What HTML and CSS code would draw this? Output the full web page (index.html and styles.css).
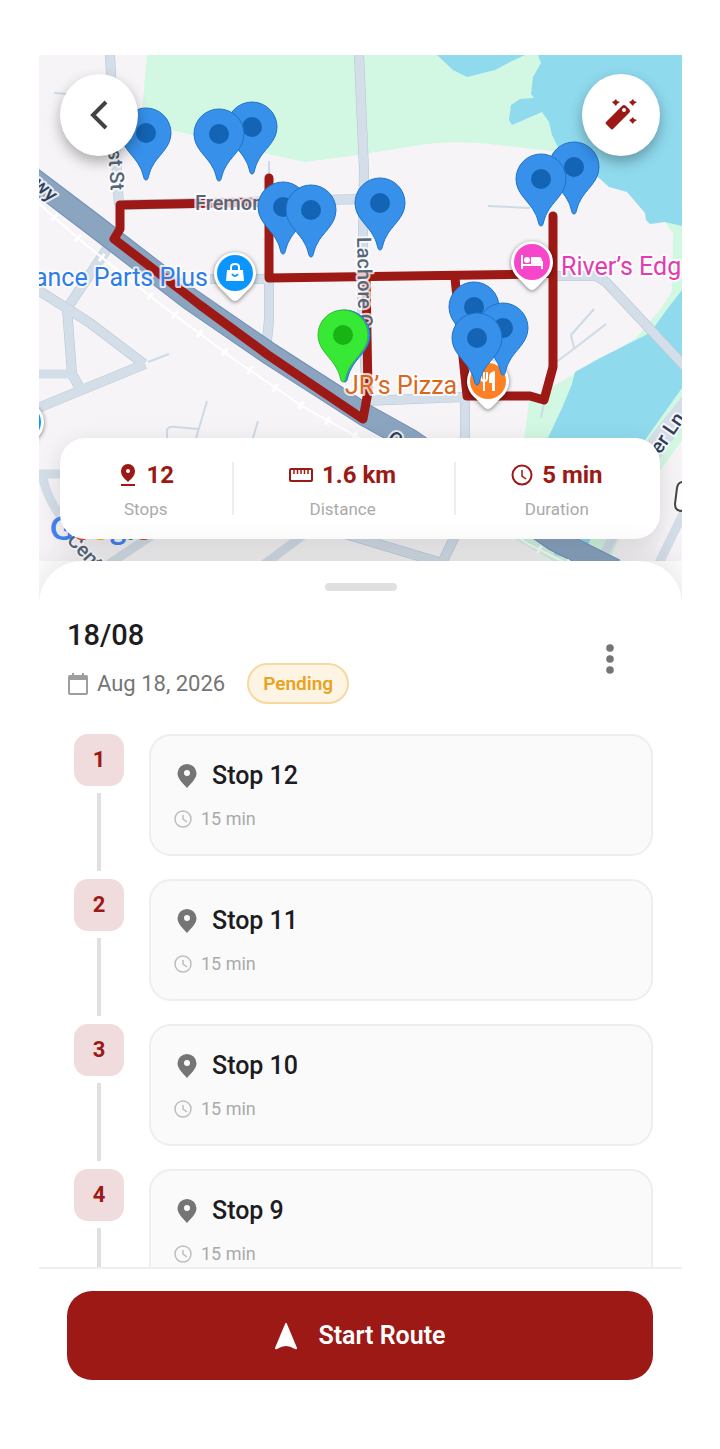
FILE: index.html
```html
<!DOCTYPE html>
<html lang="en">
<head>
  <meta charset="UTF-8">
  <meta name="viewport" content="width=device-width, initial-scale=1">
  <title>Route 18/08</title>
  <link rel="stylesheet" href="styles.css">
</head>
<body>

  <main class="app">
    <section class="map">
      <svg class="map-canvas" viewBox="39 55 643 506" preserveAspectRatio="xMidYMid slice" role="img" aria-label="Route map">
        <defs>
          <g id="pin">
            <path class="pin-body" d="M0 47C-3 47-2 41-6 34C-11 23-25 15-25 0A25 25 0 0 1 25 0C25 15 11 23 6 34C2 41 3 47 0 47Z"/>
            <circle class="pin-dot" r="10"/>
          </g>
          <g id="poi">
            <path class="poi-shape" d="M0 28C-4 28-7 22-14 16A21 21 0 1 1 14 16C7 22 4 28 0 28Z"/>
          </g>
        </defs>

        <rect class="land" x="39" y="55" width="643" height="506"/>

        <!-- parks -->
        <path class="park" d="M147 55L141 122L172 130L192 135L252 150L268 154L305 162L358 155L420 145Q450 140 490 144L560 152L600 100V55Z"/>
        <path class="park" d="M627 189L645 213L660 222L673 232L672 291L662 307L636 338L600 360L555 385L529 402L524 440L515 539L553 561H610L620 535L664 465L682 440V210Z"/>
        <path class="land" d="M573 160L599 178L627 192L645 213L650 224L665 222L672 232V280L650 200L560 162Z"/>

        <!-- water -->
        <path class="water" d="M437 55L453 70L467 77L495 70L512 61L525 55Z"/>
        <path class="water" d="M538 55L541 63L533 77L531 94L534 98L520 99L511 105L509 120L512 125L542 112L549 122L552 135L558 147L575 160L599 178L609 187L627 192L645 213L646 220L650 224L665 222L682 226V55Z"/>
        <path class="water" d="M682 290L668 308L650 333L600 358L575 372L572 384L562 408L547 440L548 539L555 555L580 561L600 520L645 440L682 388Z"/>

        <!-- streets -->
        <g class="driveway">
          <path d="M54 93L82 95"/>
          <path d="M148 362L169 354"/>
          <path d="M207 401L194 445"/>
          <path d="M167 445V430Q168 426 176 427L198 429"/>
          <path d="M258 421L250 448"/>
          <path d="M488 206L530 208"/>
          <path d="M594 309L571 335L574 348"/>
          <path d="M606 324L575 348L555 363"/>
          <path d="M545 398L541 418"/>
          <path d="M269 161V180"/>
        </g>
        <g class="street-edge">
          <path d="M110 55L113 110L119 205"/>
          <path d="M359 55L364 170L362 300L367 400"/>
          <path d="M119 205L364 199"/>
          <path d="M210 279H269V320L266 350"/>
          <path d="M364 401L462 397"/>
          <path d="M465 397V445"/>
          <path d="M38 290L90 323L144 364"/>
          <path d="M145 364L38 408"/>
          <path d="M67 308L72 374L81 390"/>
          <path d="M109 246L70 304"/>
          <path d="M345 534L442 563L458 530"/>
          <path d="M550 276H596L606 282L690 372"/>
        </g>
        <g class="street">
          <path d="M110 55L113 110L119 205"/>
          <path d="M359 55L364 170L362 300L367 400"/>
          <path d="M119 205L364 199"/>
          <path d="M210 279H269V320L266 350"/>
          <path d="M364 401L462 397"/>
          <path d="M465 397V445"/>
          <path d="M38 290L90 323L144 364"/>
          <path d="M145 364L38 408"/>
          <path d="M67 308L72 374L81 390"/>
          <path d="M38 374H72"/>
          <path d="M109 246L70 304"/>
          <path d="M38 474H70"/>
          <path d="M42 475Q48 500 60 515"/>
          <path d="M106 566L160 530"/>
          <path d="M262 566L310 530"/>
          <path d="M345 534L442 563L458 530"/>
          <path d="M684 512L658 565"/>
          <path d="M618 528L603 556"/>
          <path d="M550 276H596L606 282L690 372"/>
          <path class="wide" d="M692 400L660 440L640 470"/>
        </g>

        <!-- highway and railway -->
        <path class="highway-edge" d="M28 175L90 222L190 299L270 354L365 415L410 440L555 540L615 570"/>
        <path class="highway" d="M28 175L90 222L190 299L270 354L365 415L410 440L555 540L615 570"/>
        <path class="rail" d="M30 196L85 244L160 304L235 360L305 408L390 455L530 545L570 565"/>
        <path class="rail-ties" d="M30 196L85 244L160 304L235 360L305 408L390 455L530 545L570 565"/>

        <!-- route -->
        <path class="route" d="M269 178V278L540 274L553 273V216V367L544 400L530 396H467L455 278"/>
        <path class="route" d="M269 202L120 205V229L114 239L152 268L200 305L268 355L363 419L368 392L366 278"/>

        <!-- street names -->
        <text class="street-name" x="195" y="210">Fremon</text>
        <text class="street-name" transform="translate(357 237) rotate(89)">Lachore C</text>
        <text class="street-name" transform="translate(108 150) rotate(86)">st St</text>
        <text class="street-name dark" transform="translate(32 186) rotate(42)">wy</text>
        <text class="street-name dark" transform="translate(386 442) rotate(30)">C</text>
        <text class="street-name dark" transform="translate(660 455) rotate(-55)">er Ln</text>
        <text class="street-name" transform="translate(66 541) rotate(47)">Cent</text>
        <path class="shield" d="M690 482H683Q678 482 677 488L675 504Q675 511 682 511H690Z"/>

        <!-- places -->
        <text class="place blue" x="208" y="286" text-anchor="end">ance Parts Plus</text>
        <text class="place pink" x="561" y="275">River’s Edg</text>
        <text class="place orange" x="345" y="394">JR’s Pizza</text>

        <use href="#poi" x="23" y="422"/>
        <circle class="fill-blue" cx="23" cy="422" r="18"/>
        <g transform="translate(235 273)">
          <use href="#poi"/>
          <circle class="fill-blue" r="18"/>
          <path class="fill-white" d="M-8-3H8L9 8H-9Z"/>
          <path class="line-white" d="M-4-3V-6Q-4-9 0-9Q4-9 4-6V-3"/>
          <path class="line-blue" d="M-3 1Q0 5 3 1"/>
        </g>
        <g transform="translate(532 262)">
          <use href="#poi"/>
          <circle class="fill-pink" r="18"/>
          <path class="line-white" d="M-10-7V7M-10 3H10M10 7V-1"/>
          <circle class="fill-white" cx="-5" cy="-2" r="3"/>
          <path class="fill-white" d="M-1-5H7Q10-5 10-1V2H-1Z"/>
        </g>
        <g transform="translate(488 381)">
          <use href="#poi"/>
          <circle class="fill-orange" r="18"/>
          <path class="line-white" d="M-7-9V-3Q-7 0-4 0Q-1 0-1-3V-9M-4-9V10"/>
          <path class="fill-white" d="M7-10V10H4V2H1V-4Q1-9 7-10Z"/>
        </g>

        <!-- stops -->
        <g class="pins">
          <use href="#pin" x="146" y="133"/>
          <use href="#pin" x="252" y="127"/>
          <use href="#pin" x="219" y="134"/>
          <use href="#pin" x="283" y="207"/>
          <use href="#pin" x="311" y="210"/>
          <use href="#pin" x="380" y="203"/>
          <use href="#pin" x="574" y="167"/>
          <use href="#pin" x="541" y="179"/>
          <use href="#pin" x="474" y="307"/>
          <use href="#pin" x="503" y="328"/>
          <use href="#pin" x="477" y="338"/>
          <use href="#pin" x="345" y="335"/>
        </g>
        <g class="pins start">
          <use href="#pin" x="343" y="335"/>
        </g>

        <text class="google" x="50" y="540"><tspan class="g-blue">G</tspan><tspan class="g-red">o</tspan><tspan class="g-yellow">o</tspan><tspan class="g-blue">g</tspan><tspan class="g-green">l</tspan><tspan class="g-red">e</tspan></text>
      </svg>

      <button class="round-btn back" type="button" aria-label="Back">
        <svg width="32" height="34" viewBox="0 0 32 34"><path class="chevron" d="M23 4L10 17L23 30"/></svg>
      </button>
      <button class="round-btn optimize" type="button" aria-label="Optimize route">
        <svg width="34" height="34" viewBox="0 0 34 34" fill="currentColor">
          <path fill-rule="evenodd" d="M2 24L18 8Q20 6 22 8L25 11Q27 13 25 15L9 31Q8 32 7 31L2 26Q1 25 2 24ZM20 10A2 2 0 1 0 20 14A2 2 0 1 0 20 10Z"/>
          <path d="M12 1L13 3L16 4L13 6L12 8L10 6L8 4L10 3ZM29 1L30 3L33 4L30 6L29 8L27 6L25 4L27 3ZM29 19L30 21L33 22L30 24L29 26L27 24L25 22L27 21Z"/>
        </svg>
      </button>

      <div class="stats">
        <div class="stat">
          <div class="stat-value">
            <svg width="20" height="24" viewBox="0 0 20 24" fill="currentColor"><path fill-rule="evenodd" d="M10 1A7 7 0 0 0 3 8C3 13 7 16 10 19C13 16 17 13 17 8A7 7 0 0 0 10 1ZM10 6A2 2 0 1 1 10 10A2 2 0 1 1 10 6Z"/><path d="M3 21H17V23H3Z"/></svg>
            <span>12</span>
          </div>
          <div class="stat-label">Stops</div>
        </div>
        <div class="stat">
          <div class="stat-value">
            <svg width="24" height="24" viewBox="0 0 24 24" fill="none" stroke="currentColor" stroke-width="2"><rect x="1" y="6" width="22" height="12" rx="1"/><path d="M5 6V11M8.500 6V11M12 6V11M15.500 6V11M19 6V11" stroke-width="1.500"/></svg>
            <span>1.6 km</span>
          </div>
          <div class="stat-label">Distance</div>
        </div>
        <div class="stat">
          <div class="stat-value">
            <svg width="22" height="24" viewBox="0 0 22 24" fill="none" stroke="currentColor" stroke-width="2"><circle cx="11" cy="12" r="9.500"/><path d="M11 7V13L15 16" stroke-width="1.500"/></svg>
            <span>5 min</span>
          </div>
          <div class="stat-label">Duration</div>
        </div>
      </div>
    </section>

    <section class="sheet">
      <div class="handle"></div>

      <header class="route-header">
        <div>
          <h1>18/08</h1>
          <div class="route-meta">
            <svg width="22" height="24" viewBox="0 0 22 24"><path class="cal-frame" d="M3 4H19Q20 4 20 5V21Q20 22 19 22H3Q2 22 2 21V5Q2 4 3 4Z"/><path class="cal-top" d="M2 3H20V8H2ZM5 1H7V4H5ZM15 1H17V4H15Z"/></svg>
            <span>Aug 18, 2026</span>
            <span class="status">Pending</span>
          </div>
        </div>
        <button class="menu-btn" type="button" aria-label="More options">
          <svg width="8" height="30" viewBox="0 0 8 30" fill="currentColor"><circle cx="4" cy="4" r="3.800"/><circle cx="4" cy="15" r="3.800"/><circle cx="4" cy="26" r="3.800"/></svg>
        </button>
      </header>

      <ol class="stops">
        <li class="stop">
          <div class="marker"><span class="number">1</span></div>
          <div class="card">
            <h2><svg class="i-pin" viewBox="0 0 26 26"><path d="M13 1A9.500 9.500 0 0 0 3.500 10C3.500 16 9 20 13 25C17 20 22.500 16 22.500 10A9.500 9.500 0 0 0 13 1ZM13 7A3 3 0 1 1 13 13A3 3 0 1 1 13 7Z"/></svg>Stop 12</h2>
            <p><svg class="i-clock" viewBox="0 0 18 18"><circle cx="9" cy="9" r="8"/><path d="M9 5V9L13 12"/></svg>15 min</p>
          </div>
        </li>
        <li class="stop">
          <div class="marker"><span class="number">2</span></div>
          <div class="card">
            <h2><svg class="i-pin" viewBox="0 0 26 26"><path d="M13 1A9.500 9.500 0 0 0 3.500 10C3.500 16 9 20 13 25C17 20 22.500 16 22.500 10A9.500 9.500 0 0 0 13 1ZM13 7A3 3 0 1 1 13 13A3 3 0 1 1 13 7Z"/></svg>Stop 11</h2>
            <p><svg class="i-clock" viewBox="0 0 18 18"><circle cx="9" cy="9" r="8"/><path d="M9 5V9L13 12"/></svg>15 min</p>
          </div>
        </li>
        <li class="stop">
          <div class="marker"><span class="number">3</span></div>
          <div class="card">
            <h2><svg class="i-pin" viewBox="0 0 26 26"><path d="M13 1A9.500 9.500 0 0 0 3.500 10C3.500 16 9 20 13 25C17 20 22.500 16 22.500 10A9.500 9.500 0 0 0 13 1ZM13 7A3 3 0 1 1 13 13A3 3 0 1 1 13 7Z"/></svg>Stop 10</h2>
            <p><svg class="i-clock" viewBox="0 0 18 18"><circle cx="9" cy="9" r="8"/><path d="M9 5V9L13 12"/></svg>15 min</p>
          </div>
        </li>
        <li class="stop">
          <div class="marker"><span class="number">4</span></div>
          <div class="card">
            <h2><svg class="i-pin" viewBox="0 0 26 26"><path d="M13 1A9.500 9.500 0 0 0 3.500 10C3.500 16 9 20 13 25C17 20 22.500 16 22.500 10A9.500 9.500 0 0 0 13 1ZM13 7A3 3 0 1 1 13 13A3 3 0 1 1 13 7Z"/></svg>Stop 9</h2>
            <p><svg class="i-clock" viewBox="0 0 18 18"><circle cx="9" cy="9" r="8"/><path d="M9 5V9L13 12"/></svg>15 min</p>
          </div>
        </li>
      </ol>

      <footer class="actions">
        <button class="start-btn" type="button">
          <svg width="24" height="28" viewBox="0 0 24 28" fill="currentColor"><path d="M12 1Q13 1 13 2L23 26Q23 28 21 27Q16 24 12 24Q8 24 3 27Q1 28 1 26L11 2Q11 1 12 1Z"/></svg>
          Start Route
        </button>
      </footer>
    </section>
  </main>

</body>
</html>
```
FILE: styles.css
```css
:root {
  --red: #9c1915;
  --text: #1c1c22;
  --grey: #757575;
  --grey-light: #aaaaaa;
  --line: #eeeeee;
}

* {
  box-sizing: border-box;
}

body {
  margin: 0;
  background: #fff;
  color: var(--text);
  font-family: Roboto, "Liberation Sans", sans-serif;
}

button {
  border: none;
  padding: 0;
  font-family: inherit;
  cursor: pointer;
}

svg {
  flex-shrink: 0;
}

.app {
  display: flex;
  flex-direction: column;
  height: 100vh;
  padding-top: 55px;
  margin: 0 38px 0 39px;
  overflow: hidden;
}

/* MAP */
.map {
  position: relative;
  flex: none;
  height: 506px;
}

.map-canvas {
  display: block;
  width: 100%;
  height: 100%;
}

.land { fill: #f6f4f6; }
.park { fill: #d2f7e2; }
.water { fill: #90daee; }

.street path,
.street-edge path,
.driveway path {
  fill: none;
  stroke: #d3dee8;
  stroke-width: 9;
  stroke-linejoin: round;
}

.street-edge path {
  stroke: #b4c6d8;
  stroke-width: 10;
}

.street .wide {
  stroke-width: 20;
}

.driveway path {
  stroke: #cddae7;
  stroke-width: 2;
}

.highway,
.highway-edge,
.rail,
.rail-ties,
.route {
  fill: none;
}

.highway-edge {
  stroke: #6f90b8;
  stroke-width: 23;
}

.highway {
  stroke: #8ba5c1;
  stroke-width: 21;
}

.rail {
  stroke: #fff;
  stroke-width: 2;
}

.rail-ties {
  stroke: #fff;
  stroke-width: 9;
  stroke-dasharray: 3 28;
}

.route {
  stroke: var(--red);
  stroke-width: 9;
  stroke-linejoin: round;
  stroke-linecap: round;
}

.street-name,
.place {
  paint-order: stroke;
  stroke: rgba(255, 255, 255, 0.8);
  stroke-width: 4;
  stroke-linejoin: round;
}

.street-name {
  font-size: 20px;
  font-weight: 500;
  fill: #566579;
}

.street-name.dark { fill: #2f3f5c; }

.place { font-size: 25px; }
.place.blue { fill: #2f7de9; }
.place.pink { fill: #e33bb0; }
.place.orange { fill: #d9681d; }

.shield {
  fill: #fff;
  stroke: #444;
  stroke-width: 2;
}

.poi-shape {
  fill: #fff;
  filter: drop-shadow(0 1px 2px rgba(0, 0, 0, 0.5));
}

.fill-blue { fill: #0b96ff; }
.fill-pink { fill: #f846cb; }
.fill-orange { fill: #fd8025; }
.fill-white { fill: #fff; }

.line-white,
.line-blue {
  fill: none;
  stroke: #fff;
  stroke-width: 2;
}

.line-blue { stroke: #0b96ff; }

.pins {
  --pin: #3790ea;
  --pin-edge: #1f74c9;
  --pin-dot: #1364b4;
}

.pins.start {
  --pin: #37e935;
  --pin-edge: #2dc02c;
  --pin-dot: #17b414;
}

.pin-body {
  fill: var(--pin);
  stroke: var(--pin-edge);
}

.pin-dot { fill: var(--pin-dot); }

.google {
  font-family: Lato, sans-serif;
  font-size: 32px;
  font-weight: 700;
}

.g-blue { fill: #4285f4; }
.g-red { fill: #ea4335; }
.g-yellow { fill: #fbbc05; }
.g-green { fill: #34a853; }

.round-btn {
  position: absolute;
  top: 19px;
  display: flex;
  align-items: center;
  justify-content: center;
  width: 78px;
  height: 82px;
  border-radius: 50%;
  background: #fff;
  color: var(--red);
  box-shadow: 0 6px 14px rgba(0, 0, 0, 0.3);
}

.back { left: 21px; }
.optimize { right: 22px; }

.chevron {
  fill: none;
  stroke: #424242;
  stroke-width: 4;
}

/* STATS */
.stats {
  position: absolute;
  left: 21px;
  right: 22px;
  bottom: 22px;
  display: flex;
  align-items: center;
  padding: 22px 0 19px;
  border-radius: 25px;
  background: #fff;
  box-shadow: 0 6px 24px rgba(0, 0, 0, 0.12);
}

.stat {
  flex: 1 1 auto;
  display: flex;
  flex-direction: column;
  align-items: center;
  gap: 8px;
}

.stat + .stat {
  background: linear-gradient(var(--line), var(--line)) 0 2px / 2px 53px no-repeat;
}

.stat-value {
  display: flex;
  align-items: center;
  gap: 9px;
  font-size: 24px;
  font-weight: 700;
  line-height: 30px;
  color: var(--red);
}

.stat-label {
  font-size: 17px;
  line-height: 22px;
  color: var(--grey-light);
}

/* SHEET */
.sheet {
  position: relative;
  flex: 1;
  display: flex;
  flex-direction: column;
  min-height: 0;
  border-radius: 43px 43px 0 0;
  background: #fff;
  box-shadow: 0 -6px 36px rgba(0, 0, 0, 0.12);
}

.handle {
  flex: none;
  width: 72px;
  height: 8px;
  margin: 22px auto 27px;
  border-radius: 4px;
  background: #e0e0e0;
}

.route-header {
  display: flex;
  justify-content: space-between;
  padding: 0 29px 30px 28px;
}

h1 {
  margin: 0 0 11px;
  font-size: 29px;
  font-weight: 500;
  line-height: 34px;
}

.route-meta {
  display: flex;
  align-items: center;
  gap: 8px;
  font-size: 22px;
  color: var(--grey);
}

.cal-frame {
  fill: none;
  stroke: #9e9e9e;
  stroke-width: 2;
}

.cal-top { fill: #9e9e9e; }

.status {
  margin-left: 14px;
  padding: 0 14px;
  border: 2px solid #f6d9a0;
  border-radius: 21px;
  background: #fdf4e4;
  color: #e8a31f;
  font-size: 19px;
  font-weight: 600;
  line-height: 37px;
}

.menu-btn {
  display: flex;
  align-items: center;
  justify-content: center;
  width: 86px;
  height: 81px;
  background: none;
  color: var(--grey);
}

.stops {
  flex: 1;
  min-height: 0;
  margin: 0;
  padding: 0 29px 0 28px;
  list-style: none;
  overflow-y: auto;
  scrollbar-width: none;
}

.stop {
  display: flex;
  gap: 18px;
}

.marker {
  display: flex;
  flex-direction: column;
  align-items: center;
  gap: 7px;
  width: 64px;
  padding-bottom: 8px;
}

.marker::after {
  content: "";
  flex: 1;
  width: 4px;
  background: #e0e0e0;
}

.number {
  width: 50px;
  border-radius: 14px;
  background: #f0dcdd;
  color: var(--red);
  font-size: 22px;
  font-weight: 700;
  line-height: 52px;
  text-align: center;
}

.card {
  flex: 1;
  margin-bottom: 23px;
  padding: 25px 23px 23px;
  border: 2px solid var(--line);
  border-radius: 22px;
  background: #fafafa;
}

.card h2,
.card p {
  display: flex;
  align-items: center;
  margin: 0;
}

.card h2 {
  gap: 12px;
  margin-bottom: 16px;
  font-size: 25px;
  font-weight: 500;
  line-height: 30px;
}

.card p {
  gap: 9px;
  font-size: 18px;
  line-height: 24px;
  color: var(--grey-light);
}

.i-pin {
  width: 26px;
  height: 26px;
  fill: var(--grey);
  fill-rule: evenodd;
}

.i-clock {
  width: 18px;
  height: 18px;
  fill: none;
  stroke: #bdbdbd;
  stroke-width: 1.5;
}

/* BOTTOM BAR */
.actions {
  padding: 22px 29px 69px 28px;
  border-top: 2px solid var(--line);
}

.start-btn {
  display: flex;
  align-items: center;
  justify-content: center;
  gap: 20px;
  width: 100%;
  height: 89px;
  border-radius: 25px;
  background: var(--red);
  color: #fff;
  font-size: 25px;
  font-weight: 600;
}
```
